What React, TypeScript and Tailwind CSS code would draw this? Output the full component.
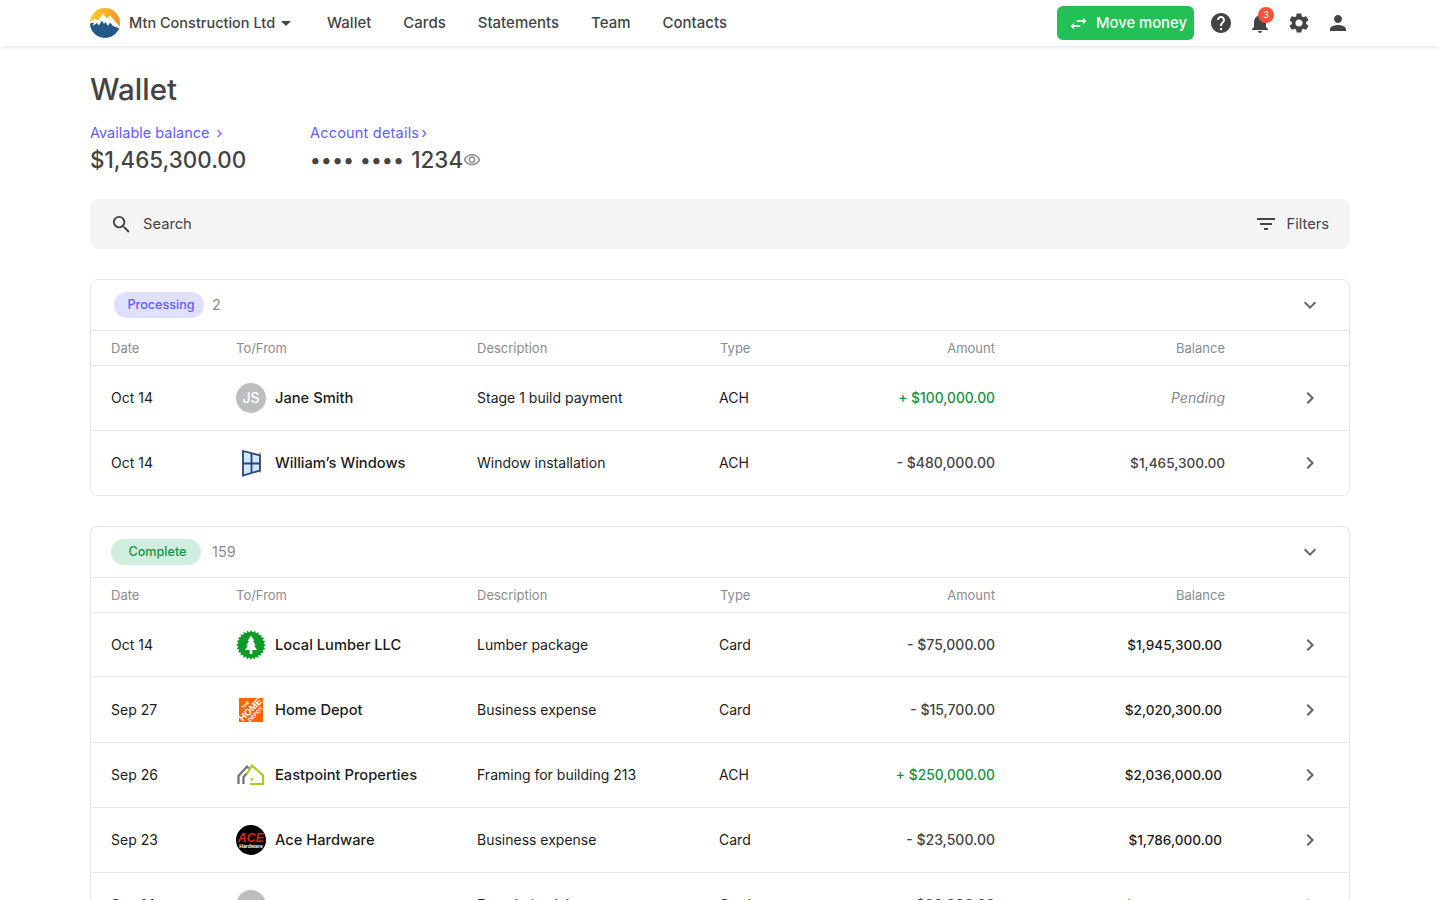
import React from 'react';
import {
  MdArrowDropDown,
  MdChevronRight,
  MdExpandMore,
  MdFilterList,
  MdHelp,
  MdNotifications,
  MdOutlineVisibility,
  MdPerson,
  MdSearch,
  MdSettings,
  MdSwapHoriz,
} from 'react-icons/md';

const MtnLogo = () => (
  <svg width="30" height="30" viewBox="0 0 30 30">
    <defs>
      <linearGradient id="sun" x1="0" y1="0" x2="1" y2="0.6">
        <stop offset="0" stopColor="#f9d423" />
        <stop offset="1" stopColor="#f58a2e" />
      </linearGradient>
      <clipPath id="disc">
        <circle cx="15" cy="15" r="15" />
      </clipPath>
    </defs>
    <g clipPath="url(#disc)">
      <rect width="30" height="30" fill="url(#sun)" />
      <path d="M0 14 L5 10.5 L8 12.5 L13 5.5 L17 10.5 L20 7.5 L30 19 V30 H0 Z" fill="#fff" />
      <path d="M0 15.5 L4 14.5 L2.5 18 L7 15 L9 17.5 L12 12.5 L14 16 L15.5 14 L18 18 L20 14.5 L23 18 L30 20.5 V30 H0 Z" fill="#20598a" />
    </g>
  </svg>
);

const WindowLogo = () => (
  <svg width="30" height="30" viewBox="0 0 30 30">
    <path d="M21 6 L25 4 V7 Z M21 23 L25 25 V22 Z" fill="#f0a040" />
    <path d="M7 3 L24 7.5 V22.5 L7 27.5 Z" fill="#d6e6f4" stroke="#20467f" strokeWidth="1.8" strokeLinejoin="miter" />
    <path d="M15.5 6 V25 M7 15.5 H24" stroke="#20467f" strokeWidth="1.8" />
  </svg>
);

const LumberLogo = () => {
  const teeth = Array.from({ length: 24 }, (_, i) => (i * 360) / 24);
  return (
    <svg width="30" height="30" viewBox="0 0 30 30">
      {teeth.map((deg) => (
        <path key={deg} d="M15 0 L17.4 3.4 H13.4 Z" fill="#0d9a27" transform={`rotate(${deg} 15 15)`} />
      ))}
      <circle cx="15" cy="15" r="12.8" fill="#0d9a27" />
      <path d="M15 5.5 L18.5 11 H17 L19.8 15.5 H18 L21 20 H16.3 V24 H13.7 V20 H9 L12 15.5 H10.2 L13 11 H11.5 Z" fill="#fff" />
    </svg>
  );
};

const DepotLogo = () => (
  <svg width="30" height="30" viewBox="0 0 30 30">
    <rect x="3" y="3" width="24" height="24" fill="#f96302" />
    <g transform="rotate(-45 15 15)" fill="#fff" fontFamily="'Liberation Sans', sans-serif" fontWeight="700" textAnchor="middle">
      <text x="15" y="9" fontSize="4.5">THE</text>
      <text x="15" y="17.5" fontSize="9.5">HOME</text>
      <text x="15" y="23" fontSize="5.5">DEPOT</text>
    </g>
  </svg>
);

const EastpointLogo = () => (
  <svg width="30" height="30" viewBox="0 0 30 30" fill="none">
    <path d="M2.5 24 V16 L11 6.5 L13 8.5" stroke="#6f7178" strokeWidth="2.2" />
    <path d="M7.5 24 V17 L11 13" stroke="#6f7178" strokeWidth="2.2" />
    <path d="M10.5 14.5 L16 5.5 L27 15.5 V24 H14" stroke="#aecb24" strokeWidth="2.2" />
    <rect x="14.5" y="18" width="2.5" height="2.5" fill="#aecb24" />
  </svg>
);

const AceLogo = () => (
  <svg width="30" height="30" viewBox="0 0 30 30">
    <circle cx="15" cy="15" r="15" fill="#000" />
    <text x="15" y="17" fontSize="12.5" fontStyle="italic" fontWeight="700" textAnchor="middle" fill="#e2231a" fontFamily="'Liberation Sans', sans-serif">ACE</text>
    <text x="15" y="22.5" fontSize="5.2" fontWeight="700" textAnchor="middle" fill="#fff" fontFamily="'Liberation Sans', sans-serif">Hardware</text>
  </svg>
);

const Initials = ({ text }: { text?: string }) => (
  <div className="w-[30px] h-[30px] rounded-full bg-[#bdbdbd] text-white text-[14px] flex items-center justify-center">{text}</div>
);

interface Row {
  date: string;
  name: string;
  logo: React.ReactNode;
  desc: string;
  type: string;
  amount: string;
  credit?: boolean;
  balance: string;
  pending?: boolean;
  h: string;
}

const processing: Row[] = [
  { date: 'Oct 14', name: 'Jane Smith', logo: <Initials text="JS" />, desc: 'Stage 1 build payment', type: 'ACH', amount: '+ $100,000.00', credit: true, balance: 'Pending', pending: true, h: 'h-[65px]' },
  { date: 'Oct 14', name: 'William’s Windows', logo: <WindowLogo />, desc: 'Window installation', type: 'ACH', amount: '- $480,000.00', balance: '$1,465,300.00', h: 'h-[64px]' },
];

const complete: Row[] = [
  { date: 'Oct 14', name: 'Local Lumber LLC', logo: <LumberLogo />, desc: 'Lumber package', type: 'Card', amount: '- $75,000.00', balance: '$1,945,300.00', h: 'h-[64px]' },
  { date: 'Sep 27', name: 'Home Depot', logo: <DepotLogo />, desc: 'Business expense', type: 'Card', amount: '- $15,700.00', balance: '$2,020,300.00', h: 'h-[66px]' },
  { date: 'Sep 26', name: 'Eastpoint Properties', logo: <EastpointLogo />, desc: 'Framing for building 213', type: 'ACH', amount: '+ $250,000.00', credit: true, balance: '$2,036,000.00', h: 'h-[65px]' },
  { date: 'Sep 23', name: 'Ace Hardware', logo: <AceLogo />, desc: 'Business expense', type: 'Card', amount: '- $23,500.00', balance: '$1,786,000.00', h: 'h-[65px]' },
  { date: 'Sep 14', name: '', logo: <Initials />, desc: 'Foundation labor', type: 'Card', amount: '- $30,000.00', balance: '$2,009,500.00', h: 'h-[65px]' },
];

const gridCols = 'grid grid-cols-[125px_241px_242px_276px_230px_1fr] items-center pl-5';

const TableHead = () => (
  <div className={`${gridCols} h-[35px] pt-px border-b border-[#e6e6e6] text-[13px] text-[#8c8c8c]`}>
    <div>Date</div>
    <div>To/From</div>
    <div>Description</div>
    <div className="flex justify-between pl-px">
      <span>Type</span>
      <span>Amount</span>
    </div>
    <div className="text-right">Balance</div>
    <div />
  </div>
);

const TableRow = ({ row, last, bold }: { row: Row; last: boolean; bold?: boolean }) => (
  <div className={`${gridCols} ${row.h} text-[14px] leading-[20px] text-[#1c1c1c] ${last ? '' : 'border-b border-[#e6e6e6]'}`}>
    <div>{row.date}</div>
    <div className="flex items-center gap-[9px] font-medium text-[14.7px]">
      {row.logo}
      <span>{row.name}</span>
    </div>
    <div>{row.desc}</div>
    <div className="flex justify-between">
      <span>{row.type}</span>
      <span className={row.credit ? 'text-[#15923f] font-medium text-[13.8px]' : 'text-[#444444] font-medium'}>{row.amount}</span>
    </div>
    {row.pending ? (
      <div className="text-right italic text-[#8c8c8c]">{row.balance}</div>
    ) : (
      <div className={bold ? 'text-right font-medium text-[13.6px] pr-[3px]' : 'text-right font-medium text-[13.6px] text-[#444444]'}>{row.balance}</div>
    )}
    <div className="flex justify-end pr-[27px]">
      <MdChevronRight className="w-6 h-6 text-[#5f6368]" />
    </div>
  </div>
);

const Section = ({ badge, badgeClass, count, rows, bold, cut }: { badge: string; badgeClass: string; count: number; rows: Row[]; bold?: boolean; cut?: boolean }) => (
  <div className={`border border-[#e6e6e6] rounded-lg ${cut ? '' : 'mb-[30px]'}`}>
    <div className="h-[51px] border-b border-[#e6e6e6] flex items-center justify-between pr-[27px]">
      <div className="flex items-center gap-2">
        <span className={badgeClass}>{badge}</span>
        <span className="text-[14.5px] text-[#8c8c8c]">{count}</span>
      </div>
      <MdExpandMore className="w-6 h-6 text-[#666666]" />
    </div>
    <TableHead />
    {rows.map((r, i) => (
      <TableRow key={r.date + r.desc} row={r} bold={bold} last={!cut && i === rows.length - 1} />
    ))}
  </div>
);

export default function App() {
  return (
    <div className="h-screen overflow-hidden bg-white font-['Inter','Liberation_Sans',sans-serif] text-[#444444]">
      <nav className="h-[46px] px-[90px] flex items-center justify-between shadow-[0_1px_4px_rgba(0,0,0,0.12)]">
        <div className="flex items-center text-[14.5px] font-medium text-[#444444]">
          <MtnLogo />
          <span className="ml-[9px]">Mtn Construction Ltd</span>
          <MdArrowDropDown className="w-6 h-6 ml-[-1px]" />
          <div className="flex items-center ml-[29px] gap-8 text-[15px]">
            <a>Wallet</a>
            <a>Cards</a>
            <a>Statements</a>
            <a>Team</a>
            <a>Contacts</a>
          </div>
        </div>
        <div className="flex items-center">
          <button className="w-[137px] h-[34px] bg-[#22c055] text-white rounded-md flex items-center pl-[11px] gap-[7px] text-[14.8px] font-medium">
            <MdSwapHoriz className="w-[21px] h-[21px]" />
            Move money
          </button>
          <MdHelp className="w-6 h-6 ml-[15px]" />
          <div className="relative ml-[15px]">
            <MdNotifications className="w-6 h-6" />
            <span className="absolute -top-[4px] left-[10px] w-4 h-4 rounded-full bg-[#f4523b] text-white text-[9px] flex items-center justify-center">3</span>
          </div>
          <MdSettings className="w-6 h-6 ml-[15px]" />
          <MdPerson className="w-6 h-6 ml-[15px]" />
        </div>
      </nav>

      <main className="px-[90px]">
        <h1 className="mt-[23px] text-[29.5px] leading-[40px] font-medium text-[#444444]">Wallet</h1>

        <div className="flex mt-[14px]">
          <div className="w-[220px]">
            <div className="flex items-center text-[14.5px] leading-[20px] text-[#5f5fff]">
              Available balance
              <span className="ml-[7px] text-[15px]">›</span>
            </div>
            <div className="text-[22.4px] leading-[34px] font-medium">$1,465,300.00</div>
          </div>
          <div>
            <div className="flex items-center text-[14.5px] tracking-[0.2px] leading-[20px] text-[#5f5fff]">
              Account details
              <span className="ml-[2px] text-[15px]">›</span>
            </div>
            <div className="flex items-center text-[22.4px] leading-[34px] font-medium">
              <span className="text-[20px] tracking-[0.4px] mr-[7px]">•••• ••••</span>
              <span>1234</span>
              <MdOutlineVisibility className="w-[18px] h-[18px] text-[#8c8c8c]" />
            </div>
          </div>
        </div>

        <div className="mt-[22px] h-[50px] rounded-lg bg-[#f5f5f5] flex items-center justify-between pl-[20px] pr-[21px] text-[14.7px]">
          <div className="flex items-center gap-[10px]">
            <MdSearch className="w-[23px] h-[23px]" />
            Search
          </div>
          <div className="flex items-center gap-[8px]">
            <MdFilterList className="w-6 h-6" />
            Filters
          </div>
        </div>

        <div className="mt-[30px]">
          <Section
            badge="Processing"
            badgeClass="ml-[23px] w-[90px] h-[26px] pl-[4px] rounded-full bg-[#dfe0ff] text-[#5f5fff] text-[12.6px] font-medium flex items-center justify-center"
            count={2}
            rows={processing}
          />
          <Section
            badge="Complete"
            badgeClass="ml-[20px] mr-[3px] w-[90px] h-[26px] pl-[3px] rounded-full bg-[#cfeedd] text-[#15923f] text-[12.6px] font-medium flex items-center justify-center"
            count={159}
            rows={complete}
            bold
            cut
          />
        </div>
      </main>
    </div>
  );
}
